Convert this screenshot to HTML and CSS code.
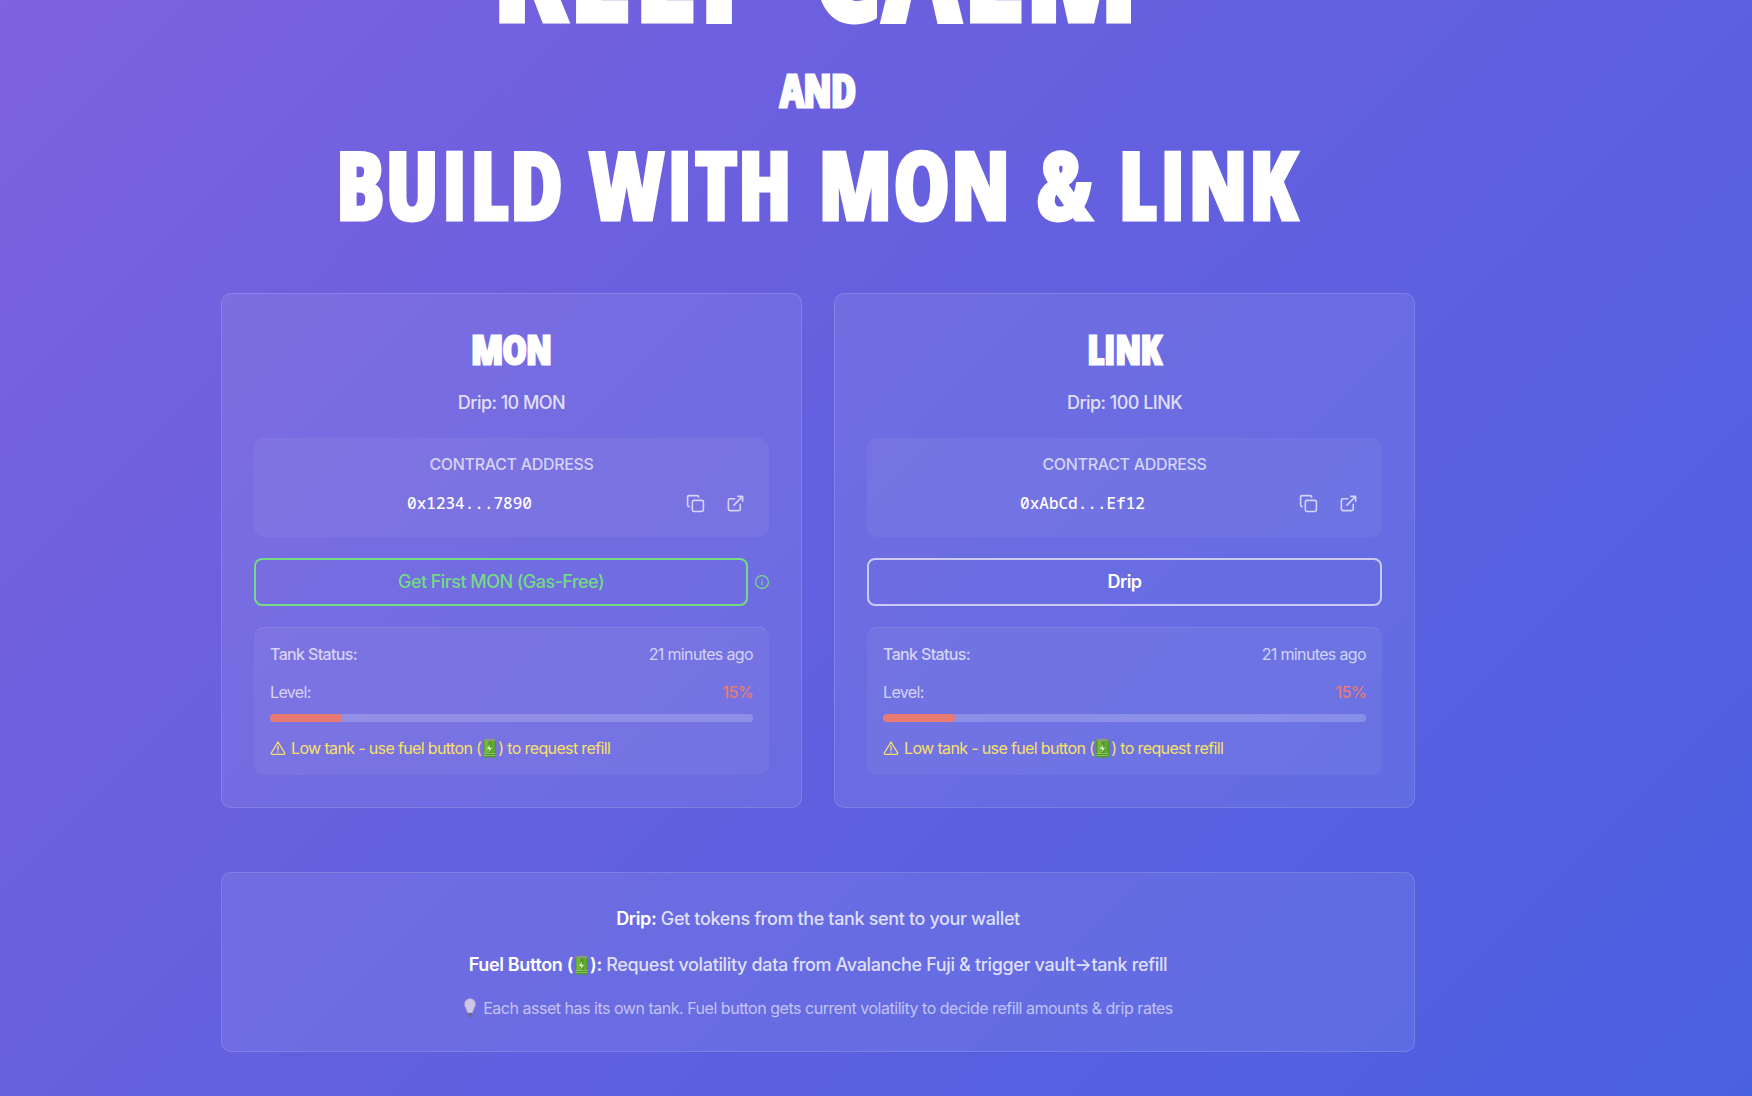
FILE: index.html
```html
<!DOCTYPE html>
<html lang="en">
<head>
<meta charset="utf-8">
<title>Faucet</title>
<link rel="stylesheet" href="styles.css">
</head>
<body>
<svg class="sprite" aria-hidden="true">
  <symbol id="copy" viewBox="0 0 24 24"><rect x="8" y="8" width="14" height="14" rx="2"/><path d="M4 16c-1.1 0-2-.9-2-2V4c0-1.1.9-2 2-2h10c1.1 0 2 .9 2 2"/></symbol>
  <symbol id="external" viewBox="0 0 24 24"><path d="M15 3h6v6M10 14 21 3M18 13v6a2 2 0 0 1-2 2H5a2 2 0 0 1-2-2V8a2 2 0 0 1 2-2h6"/></symbol>
  <symbol id="info" viewBox="0 0 24 24"><circle cx="12" cy="12" r="11"/><path d="M12 17v-6M12 7.500v.2"/></symbol>
  <symbol id="warning" viewBox="0 0 24 24"><path d="M12 3 2 19.500c-.4 1 .2 2 1.200 2h17.600c1 0 1.600-1 1.200-2L12 3zM12 9v6M12 18v.2"/></symbol>
  <symbol id="battery" viewBox="0 0 14 20">
    <rect x=".5" y="1" width="13" height="18.500" rx="1.500" fill="#4f9a27"/>
    <rect x="2" y="3" width="4" height="12" fill="#76b83c"/>
    <rect x="9" y="3" width="3" height="12" fill="#62a936"/>
    <ellipse cx="7" cy="2" rx="6.500" ry="1.500" fill="#8a9a80"/>
    <path d="M1 15.500h12M1 17.500h12" stroke="#9cc878" stroke-width=".8"/>
    <path d="M7.500 6.500 4.500 11H7l-.8 3.500 3.300-4.700H7z" fill="#e6f5d8"/>
  </symbol>
  <symbol id="bulb" viewBox="0 0 14 20">
    <path d="M7 .5a5.500 5.500 0 0 0-5.500 5.500c0 3 2.200 5 3 9h5c.8-4 3-6 3-9A5.500 5.500 0 0 0 7 .5z" fill="#cdc6ea" stroke="#a597bd" stroke-width=".8"/>
    <path d="M4.800 15h4.400l-.6 3.500L7 19.500l-1.600-1z" fill="#72698f"/>
  </symbol>
</svg>
<main class="page">
  <h1 class="hero">
    <span class="hero-top">KEEP CALM</span>
    <span class="hero-and">AND</span>
    <span class="hero-main">BUILD WITH MON &amp; LINK</span>
  </h1>
  <div class="cards">
    <section class="panel card">
      <h2 class="token">MON</h2>
      <p class="rate">Drip: 10 MON</p>
      <div class="address">
        <p class="address-label">CONTRACT ADDRESS</p>
        <div class="address-row">
          <code class="address-value">0x1234...7890</code>
          <div class="address-actions">
            <button class="icon-button" type="button" aria-label="Copy address"><svg class="icon"><use href="#copy"/></svg></button>
            <a class="icon-button" href="#" aria-label="Open in explorer"><svg class="icon"><use href="#external"/></svg></a>
          </div>
        </div>
      </div>
      <div class="action-row">
        <button class="action action-free" type="button">Get First MON (Gas-Free)</button>
        <svg class="icon icon-info"><use href="#info"/></svg>
      </div>
      <div class="tank">
        <div class="row"><span class="status">Tank Status:</span><span>21 minutes ago</span></div>
        <div class="row level"><span>Level:</span><span class="low">15%</span></div>
        <div class="bar"><div class="fill" style="width: 15%"></div></div>
        <p class="warning"><svg class="icon icon-warning"><use href="#warning"/></svg><span>Low tank - use fuel button (<svg class="battery"><use href="#battery"/></svg>) to request refill</span></p>
      </div>
    </section>
    <section class="panel card">
      <h2 class="token">LINK</h2>
      <p class="rate">Drip: 100 LINK</p>
      <div class="address">
        <p class="address-label">CONTRACT ADDRESS</p>
        <div class="address-row">
          <code class="address-value">0xAbCd...Ef12</code>
          <div class="address-actions">
            <button class="icon-button" type="button" aria-label="Copy address"><svg class="icon"><use href="#copy"/></svg></button>
            <a class="icon-button" href="#" aria-label="Open in explorer"><svg class="icon"><use href="#external"/></svg></a>
          </div>
        </div>
      </div>
      <div class="action-row">
        <button class="action" type="button">Drip</button>
      </div>
      <div class="tank">
        <div class="row"><span class="status">Tank Status:</span><span>21 minutes ago</span></div>
        <div class="row level"><span>Level:</span><span class="low">15%</span></div>
        <div class="bar"><div class="fill" style="width: 15%"></div></div>
        <p class="warning"><svg class="icon icon-warning"><use href="#warning"/></svg><span>Low tank - use fuel button (<svg class="battery"><use href="#battery"/></svg>) to request refill</span></p>
      </div>
    </section>
  </div>
  <section class="panel help">
    <p class="help-line"><strong>Drip:</strong> Get tokens from the tank sent to your wallet</p>
    <p class="help-line"><strong>Fuel Button (<svg class="battery"><use href="#battery"/></svg>):</strong> Request volatility data from Avalanche Fuji &amp; trigger vault→tank refill</p>
    <p class="help-note"><svg class="bulb"><use href="#bulb"/></svg> Each asset has its own tank. Fuel button gets current volatility to decide refill amounts &amp; drip rates</p>
  </section>
</main>
</body>
</html>
```
FILE: styles.css
```css
* { box-sizing: border-box; margin: 0; padding: 0; }

html { min-height: 100%; }

body {
  min-height: 100vh;
  padding-right: 116px;
  overflow: hidden;
  background: linear-gradient(135deg, #7e62de 0%, #6960df 35%, #5a60e0 67%, #4a60e2 100%);
  color: #fff;
  font-family: Inter, "Liberation Sans", sans-serif;
  font-size: 16px;
  line-height: 24px;
  letter-spacing: -0.04em;
}

.sprite { display: none; }

.page {
  max-width: 1194px;
  margin: 0 auto;
  padding-bottom: 44px;
}

.hero, .token {
  font-family: Impact, "Open Sans Condensed", "Liberation Sans Narrow", sans-serif;
  font-weight: 900;
  text-align: center;
  letter-spacing: 0;
}

.hero {
  display: flex;
  flex-direction: column;
  align-items: center;
  margin: -116px 0 57px;
  white-space: nowrap;
}

.hero-top {
  font-size: 140px;
  line-height: 164px;
  letter-spacing: 0.04em;
  -webkit-text-stroke: 7px #fff;
}

.hero-and {
  font-size: 44px;
  line-height: 84px;
  -webkit-text-stroke: 3px #fff;
}

.hero-main {
  font-size: 92px;
  line-height: 104px;
  letter-spacing: 0.03em;
  -webkit-text-stroke: 5px #fff;
}

.cards {
  display: grid;
  grid-template-columns: 1fr 1fr;
  gap: 32px;
}

.panel {
  border: 1px solid rgba(255, 255, 255, 0.13);
  border-radius: 10px;
  background: rgba(255, 255, 255, 0.08);
}

.card { padding: 32px; }

.token {
  font-size: 40px;
  line-height: 46px;
  -webkit-text-stroke: 3px #fff;
}

.rate {
  margin-top: 19px;
  font-size: 18px;
  line-height: 24px;
  font-weight: 500;
  letter-spacing: -0.03em;
  text-align: center;
  color: rgba(255, 255, 255, 0.8);
}

.address {
  margin-top: 23px;
  padding: 14px 18px 18px;
  border-radius: 10px;
  background: rgba(255, 255, 255, 0.05);
}

.address-label {
  text-align: center;
  font-weight: 500;
  letter-spacing: -0.02em;
  color: rgba(255, 255, 255, 0.7);
}

.address-row { display: flex; align-items: center; gap: 12px; margin-top: 11px; }

.address-value {
  flex: 1;
  text-align: center;
  font-family: "Noto Sans Mono", "DejaVu Sans Mono", monospace;
  font-size: 16px;
  font-weight: 500;
  letter-spacing: 0;
}

.address-actions { display: flex; gap: 8px; }

.icon-button {
  display: flex;
  align-items: center;
  justify-content: center;
  width: 32px;
  height: 32px;
  border: 0;
  background: none;
  color: rgba(255, 255, 255, 0.7);
}

.icon {
  flex: none;
  width: 19px;
  height: 19px;
  fill: none;
  stroke: currentColor;
  stroke-width: 2;
  stroke-linecap: round;
  stroke-linejoin: round;
}

.action-row { display: flex; align-items: center; gap: 7px; margin-top: 21px; }

.action {
  flex: 1;
  height: 48px;
  border: 2px solid rgba(255, 255, 255, 0.65);
  border-radius: 8px;
  background: none;
  color: #fff;
  font: 600 18px/24px Inter, "Liberation Sans", sans-serif;
  letter-spacing: -0.03em;
}

.action-free { border-color: #73da85; color: #73da85; font-weight: 500; }

.icon-info { width: 14px; height: 14px; color: #73da85; }

.tank {
  margin-top: 21px;
  padding: 14px 15px;
  border: 1px solid transparent;
  border-top-color: rgba(255, 255, 255, 0.1);
  border-radius: 10px;
  background: rgba(255, 255, 255, 0.05);
  color: rgba(255, 255, 255, 0.7);
}

.row { display: flex; justify-content: space-between; }
.status { font-weight: 500; }
.level { margin-top: 14px; }
.low { color: #e87a72; font-weight: 500; }

.bar {
  height: 8px;
  margin-top: 10px;
  overflow: hidden;
  border-radius: 4px;
  background: rgba(255, 255, 255, 0.2);
}

.fill { height: 100%; border-radius: 4px; background: #e87a72; }

.warning {
  display: flex;
  align-items: center;
  gap: 5px;
  margin-top: 14px;
  color: #f8e067;
}

.icon-warning { width: 16px; height: 16px; }

.battery { width: 15px; height: 20px; margin: 0 1px; vertical-align: -4px; }

.help {
  margin-top: 64px;
  padding: 32px;
  text-align: center;
}

.help-line {
  margin-bottom: 18px;
  font-size: 18px;
  line-height: 28px;
  font-weight: 500;
  letter-spacing: -0.02em;
  color: rgba(255, 255, 255, 0.8);
}

.help-line strong { color: #fff; font-weight: 600; }

.help-note {
  line-height: 22px;
  letter-spacing: -0.03em;
  color: rgba(255, 255, 255, 0.6);
}

.bulb { width: 14px; height: 20px; margin-right: 2px; vertical-align: -4px; }
```
